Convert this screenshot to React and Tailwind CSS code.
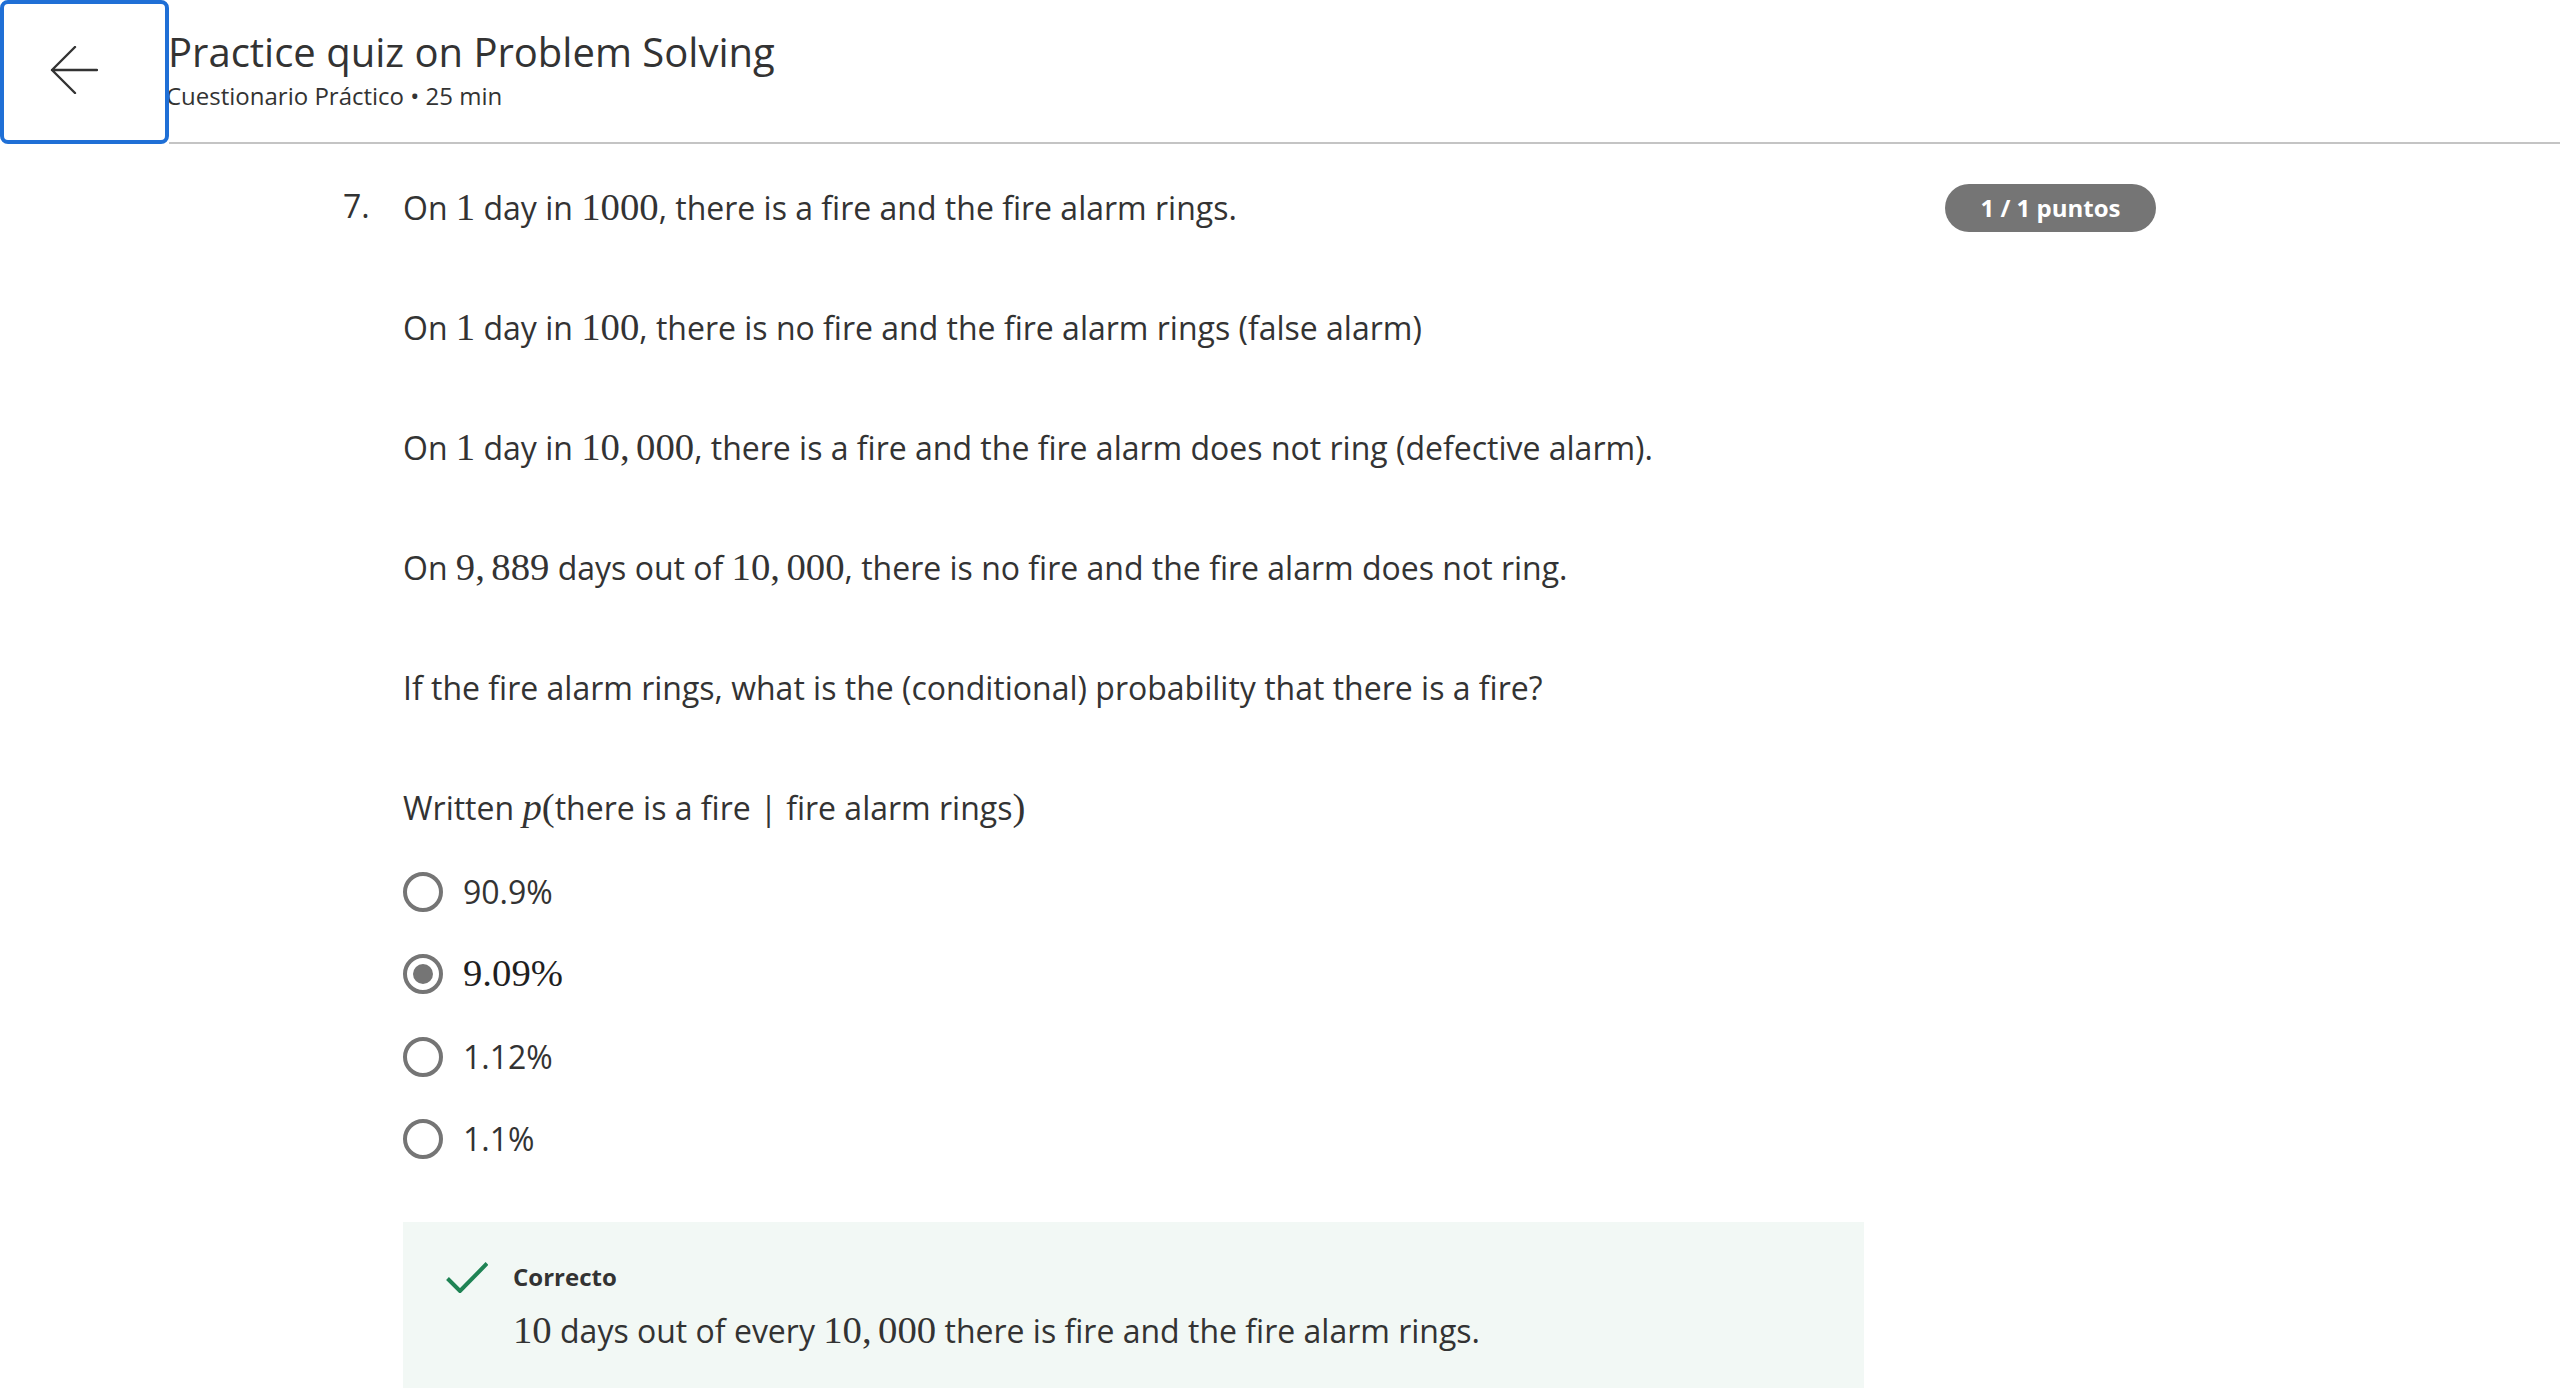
import { useState } from "react";

// KaTeX-like inline math, rendered in a serif at 1.21em
const M = ({ children, italic }) => (
    <span
        className={`font-['Liberation_Serif',serif] text-[1.21em] leading-none ${italic ? "italic" : ""}`}
    >
        {children}
    </span>
);

const Thin = () => <span className="inline-block w-[0.1667em]" />;

const options = [
    { id: "a", label: "90.9%" },
    { id: "b", label: "9.09%", math: true },
    { id: "c", label: "1.12%" },
    { id: "d", label: "1.1%" },
];

const Radio = ({ checked }) => (
    <span className="flex size-[40px] shrink-0 items-center justify-center rounded-full border-4 border-[#757575]">
        {checked && <span className="size-[20px] rounded-full bg-[#757575]" />}
    </span>
);

export default function App() {
    const [selected, setSelected] = useState("b");

    return (
        <div className="min-h-screen bg-white font-['Open_Sans',sans-serif] text-[#333333]">
            <header className="flex h-[144px]">
                <button
                    type="button"
                    aria-label="Back"
                    className="relative z-10 flex h-[144px] w-[169px] shrink-0 items-center rounded-[8px] border-4 border-[#1f6fd6] bg-white pl-[46px]"
                >
                    <svg width="48" height="48" viewBox="0 0 48 48" fill="none" className="-mt-[4px]">
                        <path
                            d="M47 24H2M25 1L2 24L25 47"
                            stroke="#333333"
                            strokeWidth="2.4"
                            strokeLinecap="round"
                            strokeLinejoin="round"
                        />
                    </svg>
                </button>
                <div className="flex-1 border-b-2 border-[#c4c4c4] pt-[26.5px]">
                    <h1 className="-ml-[1px] text-[40px] font-normal leading-[50px]">
                        Practice quiz on Problem Solving
                    </h1>
                    <p className="-ml-[3px] mt-[2px] text-[24px] leading-[34px]">
                        Cuestionario Práctico • 25 min
                    </p>
                </div>
            </header>

            <main className="flex pl-[343px] pr-[404px] pt-[40px]">
                <div className="-mt-[2px] w-[60px] shrink-0 text-[32px] leading-[48px]">7.</div>

                <div className="flex-1 text-[32px] leading-[48px]">
                    <div className="flex flex-col gap-[72px]">
                        <p>
                            On <M>1</M> day in <M>1000</M>, there is a fire and the fire alarm rings.
                        </p>
                        <p>
                            On <M>1</M> day in <M>100</M>, there is no fire and the fire alarm rings (false alarm)
                        </p>
                        <p>
                            On <M>1</M> day in <M>10,<Thin />000</M>, there is a fire and the fire alarm does not ring
                            (defective alarm).
                        </p>
                        <p>
                            On <M>9,<Thin />889</M> days out of <M>10,<Thin />000</M>, there is no fire and the fire
                            alarm does not ring.
                        </p>
                        <p>If the fire alarm rings, what is the (conditional) probability that there is a fire?</p>
                        <p>
                            Written <M italic>p</M>
                            <M>(</M>there is a fire<span className="mx-[0.28em]">|</span>fire alarm rings<M>)</M>
                        </p>
                    </div>

                    <div className="mt-[18.5px] flex flex-col">
                        {options.map((o) => (
                            <label
                                key={o.id}
                                className="flex h-[82.5px] cursor-pointer items-center gap-[20px]"
                                onClick={() => setSelected(o.id)}
                            >
                                <Radio checked={selected === o.id} />
                                {o.math ? (
                                    <span className="text-[#1f1f1f]">
                                        <M>{o.label}</M>
                                    </span>
                                ) : (
                                    <span>{o.label}</span>
                                )}
                            </label>
                        ))}
                    </div>

                    <div className="mt-[41px] w-[1461px] bg-[#f2f8f5] pb-[48px] pl-[43px] pt-[39.5px]">
                        <div className="flex gap-[25px]">
                            <svg width="42" height="31" viewBox="0 0 42 31" fill="none" className="mt-[1px] shrink-0">
                                <path d="M1.5 16.5L14 29L41 1.5" stroke="#1f8354" strokeWidth="4" />
                            </svg>
                            <div>
                                <p className="text-[24px] font-bold leading-[32px]">Correcto</p>
                                <p className="mt-[14px]">
                                    <M>10</M> days out of every <M>10,<Thin />000</M> there is fire and the fire alarm
                                    rings.
                                </p>
                            </div>
                        </div>
                    </div>
                </div>

                <div className="-mt-[0.5px] flex h-[48px] w-[211px] shrink-0 items-center justify-center rounded-full bg-[#757575] text-[24px] font-bold text-white">
                    1 / 1 puntos
                </div>
            </main>
        </div>
    );
}
